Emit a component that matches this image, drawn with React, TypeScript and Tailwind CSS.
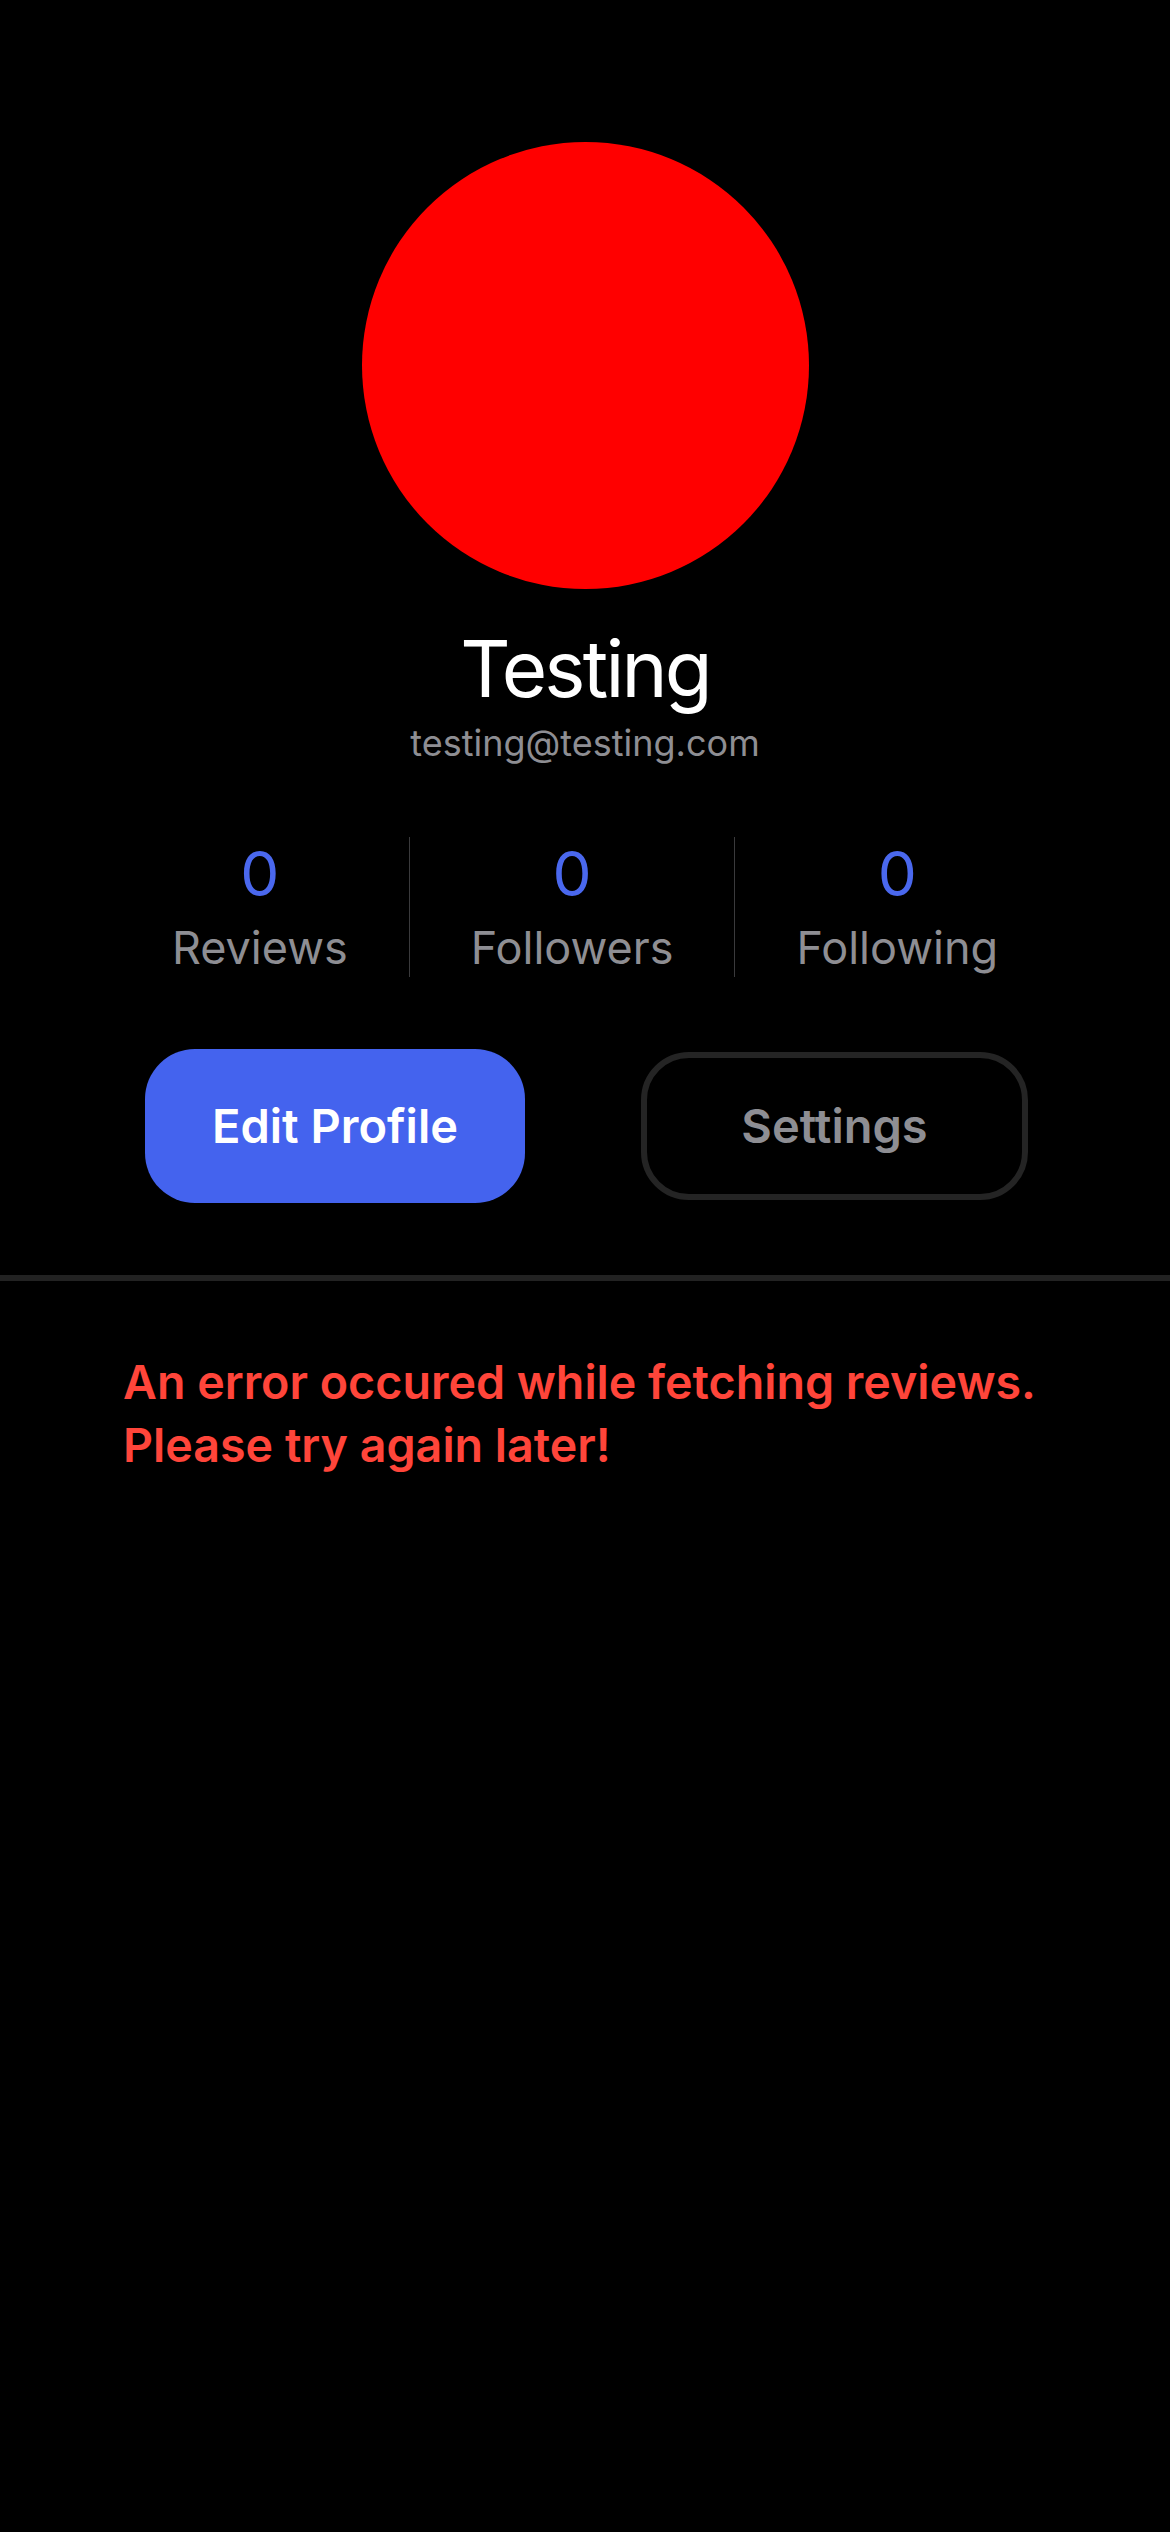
const stats = [
  { value: 0, label: 'Reviews' },
  { value: 0, label: 'Followers' },
  { value: 0, label: 'Following' },
];

export default function App() {
  return (
    <div className="min-h-[2532px] w-full bg-black font-['Inter','Liberation_Sans',sans-serif] flex flex-col">
      <div className="flex flex-col items-center pt-[142px]">
        <div className="w-[447px] h-[447px] rounded-full bg-[#ff0000]" />

        <h1 className="mt-[32px] text-[78px] leading-[96px] tracking-[-0.036em] text-white font-normal">
          Testing
        </h1>
        <p className="mt-[3px] text-[36px] leading-[46px] text-[#8e8e93]">testing@testing.com</p>

        <div className="mt-[71px] flex">
          {stats.map((s, i) => (
            <div
              key={s.label}
              className={
                i === 0
                  ? 'flex flex-col items-center px-[61px] h-[140px]'
                  : 'flex flex-col items-center px-[61px] h-[140px] border-l-[1.5px] border-[#3a3a3c]'
              }
            >
              <span className="text-[62px] leading-[74px] text-[#4a68ee]">{s.value}</span>
              <span className="mt-[10px] text-[45px] leading-[54px] text-[#8e8e93]">{s.label}</span>
            </div>
          ))}
        </div>
      </div>

      <div className="mt-[72px] flex justify-between pl-[145px] pr-[142px]">
        <button
          type="button"
          className="w-[380px] h-[154px] rounded-[50px] bg-[#4463ee] text-white text-[47px] font-semibold"
        >
          Edit Profile
        </button>
        <button
          type="button"
          className="w-[387px] h-[148px] mt-[3px] rounded-[48px] border-[6px] border-[#242424] bg-black text-[#8e8e93] text-[47px] font-semibold"
        >
          Settings
        </button>
      </div>

      <div className="mt-[72px] h-[6px] w-full bg-[#222222]" />

      <p className="mt-[70px] pl-[123px] text-[46.6px] leading-[63px] font-semibold text-[#ff453a]">
        An error occured while fetching reviews.
        <br />
        Please try again later!
      </p>
    </div>
  );
}
